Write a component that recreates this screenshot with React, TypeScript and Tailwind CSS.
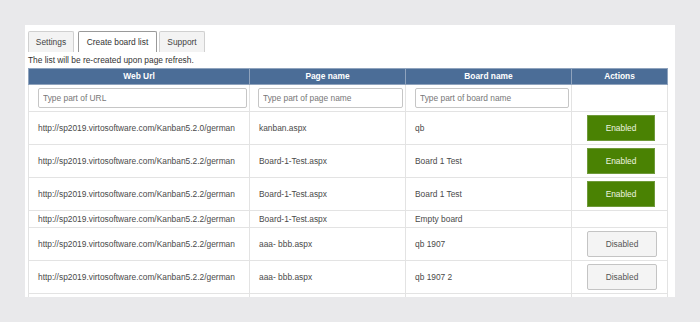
import React from "react";

type Row = { url: string; page: string; board: string; action: "enabled" | "disabled" | "none" };

const rows: Row[] = [
  { url: "http://sp2019.virtosoftware.com/Kanban5.2.0/german", page: "kanban.aspx", board: "qb", action: "enabled" },
  { url: "http://sp2019.virtosoftware.com/Kanban5.2.2/german", page: "Board-1-Test.aspx", board: "Board 1 Test", action: "enabled" },
  { url: "http://sp2019.virtosoftware.com/Kanban5.2.2/german", page: "Board-1-Test.aspx", board: "Board 1 Test", action: "enabled" },
  { url: "http://sp2019.virtosoftware.com/Kanban5.2.2/german", page: "Board-1-Test.aspx", board: "Empty board", action: "none" },
  { url: "http://sp2019.virtosoftware.com/Kanban5.2.2/german", page: "aaa- bbb.aspx", board: "qb 1907", action: "disabled" },
  { url: "http://sp2019.virtosoftware.com/Kanban5.2.2/german", page: "aaa- bbb.aspx", board: "qb 1907 2", action: "disabled" },
];

const cell = "border border-[#e3e3e3] px-[9px] py-[3px] leading-[10px] text-[#4a4a4a] align-middle";

export default function App() {
  return (
    <div
      className="w-[700px] h-[322px] bg-[#e9e9eb] pt-[25px] pl-[25px]"
      style={{ fontFamily: '"Liberation Sans", Arial, sans-serif' }}
    >
      <div className="w-[650px] h-[272px] bg-white overflow-hidden pl-[3px] pt-[6px] text-[8.4px]">
        <div className="flex items-end h-[21px]">
          <div className="w-[46px] h-[21px] flex items-center justify-center bg-[#f3f3f3] border border-b-0 border-[#d0d0d0] rounded-t-[2px] text-[#444]">
            Settings
          </div>
          <div className="ml-[4px] w-[79px] h-[21px] flex items-center justify-center bg-white border border-b-0 border-[#9a9a9a] rounded-t-[2px] text-[#333]">
            Create board list
          </div>
          <div className="ml-[2px] w-[46px] h-[21px] flex items-center justify-center bg-[#f3f3f3] border border-b-0 border-[#d0d0d0] rounded-t-[2px] text-[#444]">
            Support
          </div>
        </div>
        <div className="mt-[2px] mb-[2px] leading-[12px] text-[#333]">The list will be re-created upon page refresh.</div>
        <table className="border-collapse table-fixed w-[639px]">
          <colgroup>
            <col className="w-[221px]" />
            <col className="w-[156px]" />
            <col className="w-[166px]" />
            <col className="w-[96px]" />
          </colgroup>
          <thead>
            <tr className="bg-[#4b6d97] text-white">
              {["Web Url", "Page name", "Board name", "Actions"].map((h) => (
                <th key={h} className="border border-[#8fa3bd] py-[3px] leading-[9px] font-bold text-center">
                  {h}
                </th>
              ))}
            </tr>
          </thead>
          <tbody>
            <tr>
              <td className="border border-[#e3e3e3] pl-[9px] pr-[2px] pt-[3px] pb-[3px]">
                <input
                  className="w-full h-[20px] border border-[#c6c6c6] rounded-[2px] px-[4px] text-[8.4px] placeholder:text-[#777] outline-none"
                  placeholder="Type part of URL"
                />
              </td>
              <td className="border border-[#e3e3e3] pl-[8px] pr-[2px] pt-[3px] pb-[3px]">
                <input
                  className="w-full h-[20px] border border-[#c6c6c6] rounded-[2px] px-[4px] text-[8.4px] placeholder:text-[#777] outline-none"
                  placeholder="Type part of page name"
                />
              </td>
              <td className="border border-[#e3e3e3] pl-[9px] pr-[2px] pt-[3px] pb-[3px]">
                <input
                  className="w-full h-[20px] border border-[#c6c6c6] rounded-[2px] px-[4px] text-[8.4px] placeholder:text-[#777] outline-none"
                  placeholder="Type part of board name"
                />
              </td>
              <td className="border border-[#e3e3e3]"></td>
            </tr>
            {rows.map((r, i) => (
              <tr key={i}>
                <td className={cell}>{r.url}</td>
                <td className={cell}>{r.page}</td>
                <td className={cell}>{r.board}</td>
                <td className="border border-[#e3e3e3] py-[3px] pl-[15px] align-middle leading-[10px]">
                  {r.action === "enabled" && (
                    <div className="w-[68px] h-[26px] flex items-center justify-center bg-[#4a8203] border border-[#6f9a3a] text-[#eef5e0] text-[8.4px]">
                      Enabled
                    </div>
                  )}
                  {r.action === "disabled" && (
                    <div className="w-[70px] h-[26px] flex items-center justify-center bg-[#f4f4f4] border border-[#c4c4c4] rounded-[2px] text-[#555] text-[8.4px]">
                      Disabled
                    </div>
                  )}
                </td>
              </tr>
            ))}
            <tr>
              <td className="border border-[#e3e3e3] h-[33px]"></td>
              <td className="border border-[#e3e3e3]"></td>
              <td className="border border-[#e3e3e3]"></td>
              <td className="border border-[#e3e3e3]"></td>
            </tr>
          </tbody>
        </table>
      </div>
    </div>
  );
}
